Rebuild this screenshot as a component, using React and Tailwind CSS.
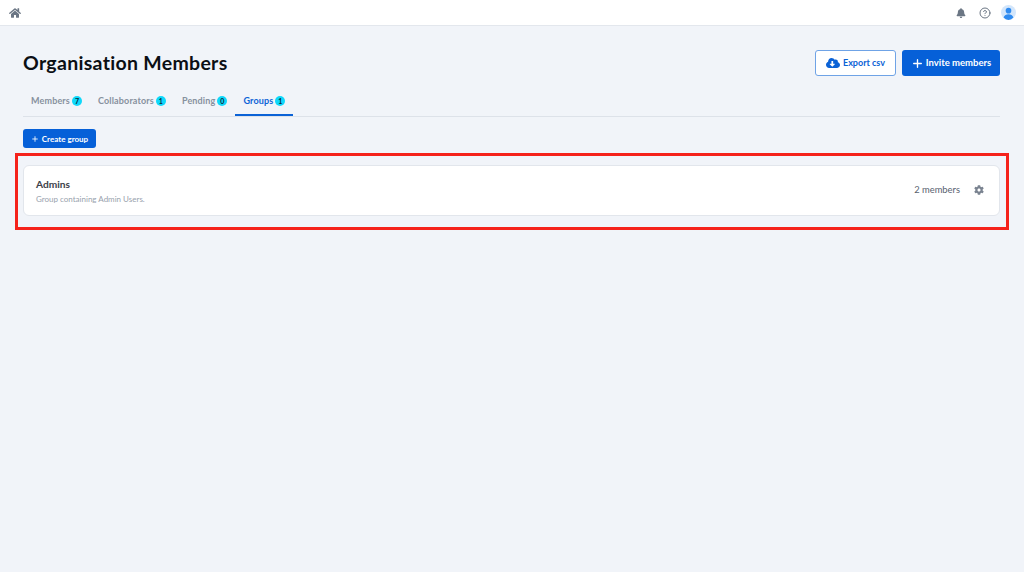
import React from "react";
import { FaHome, FaBell, FaCog, FaCloudDownloadAlt } from "react-icons/fa";
import { FiHelpCircle } from "react-icons/fi";
import { Plus } from "lucide-react";

function Tab({ label, count, active }) {
  return (
    <div className={`relative flex items-center gap-[2px] px-2 pt-[4px] h-[34px] text-[9px] font-bold tracking-[0.15px] ${active ? "text-[#0b62d6]" : "text-[#87919e]"}`}>
      <span>{label}</span>
      <span className="flex items-center justify-center w-[10px] h-[10px] rounded-full bg-[#0fd8fa] text-[7px] leading-none font-bold text-[#0b2a3a]">{count}</span>
      {active && <div className="absolute left-0 right-0 bottom-0 h-[2px] bg-[#0b62d6]" />}
    </div>
  );
}

export default function App() {
  return (
    <div className="w-[1024px] h-[572px] overflow-hidden bg-[#f1f4f9] font-['Lato',sans-serif]">
      <header className="flex items-center justify-between h-[26px] bg-white border-b border-[#e3e7ed] pl-[9px] pr-[8px]">
        <FaHome className="text-[#6b7684] w-[12px] h-[12px]" />
        <div className="flex items-center">
          <FaBell className="text-[#6b7684] w-[10px] h-[10px]" />
          <FiHelpCircle className="text-[#6b7684] w-[12px] h-[12px] ml-[13px]" />
          <svg viewBox="0 0 16 16" className="w-[15px] h-[15px] ml-[10px]">
            <circle cx="8" cy="8" r="8" fill="#d3e6fb" />
            <circle cx="8" cy="6" r="3" fill="#2f8bf0" />
            <path d="M2.8 13.2c.8-2.4 2.8-3.4 5.2-3.4s4.4 1 5.2 3.4A8 8 0 0 1 8 16a8 8 0 0 1-5.2-2.8z" fill="#2f8bf0" />
          </svg>
        </div>
      </header>

      <main className="pl-[23px] pr-[24px]">
        <div className="flex items-center justify-between pt-[24px]">
          <h1 className="text-[19.5px] leading-[24px] mt-[-1px] font-bold text-[#0b0f14] tracking-[0.3px]">Organisation Members</h1>
          <div className="flex items-center gap-[6px]">
            <button className="flex items-center justify-center gap-[3px] w-[81px] h-[26px] rounded-[3px] bg-white border border-[#6fa3e6] text-[#0b62d6] text-[9px] font-bold">
              <FaCloudDownloadAlt className="w-[14px] h-[14px]" />
              Export csv
            </button>
            <button className="flex items-center justify-center gap-[2px] w-[98px] h-[26px] rounded-[3px] bg-[#0660d8] text-white text-[9.5px] font-bold">
              <Plus className="w-[13px] h-[13px]" strokeWidth={2.5} />
              Invite members
            </button>
          </div>
        </div>

        <nav className="flex items-end border-b border-[#dde2e9] mt-[7px] h-[34px]">
          <Tab label="Members" count="7" />
          <Tab label="Collaborators" count="1" />
          <Tab label="Pending" count="0" />
          <Tab label="Groups" count="1" active />
        </nav>

        <button className="flex items-center justify-center gap-[3px] mt-[12px] w-[73px] h-[19px] rounded-[3px] bg-[#0660d8] text-white text-[8px] font-bold">
          <Plus className="w-[8px] h-[8px]" strokeWidth={2.5} />
          Create group
        </button>

        <div className="relative mt-[17px]">
          <div className="flex items-center justify-between h-[51px] bg-white border border-[#e2e6ec] rounded-[6px] pl-[12px] pr-[15px]">
            <div className="flex flex-col gap-[4px] pt-[1px]">
              <div className="text-[10.2px] leading-[12px] font-bold text-[#3c4149]">Admins</div>
              <div className="text-[8px] leading-[10px] text-[#98a1ad]">Group containing Admin Users.</div>
            </div>
            <div className="flex items-center gap-[14px]">
              <span className="text-[9.4px] text-[#596270]">2 members</span>
              <FaCog className="text-[#7a8390] w-[10px] h-[10px]" />
            </div>
          </div>
          <div className="absolute left-[-8px] right-[-9px] top-[-12px] bottom-[-14px] border-[3px] border-[#f5221b]" />
        </div>
      </main>
    </div>
  );
}
